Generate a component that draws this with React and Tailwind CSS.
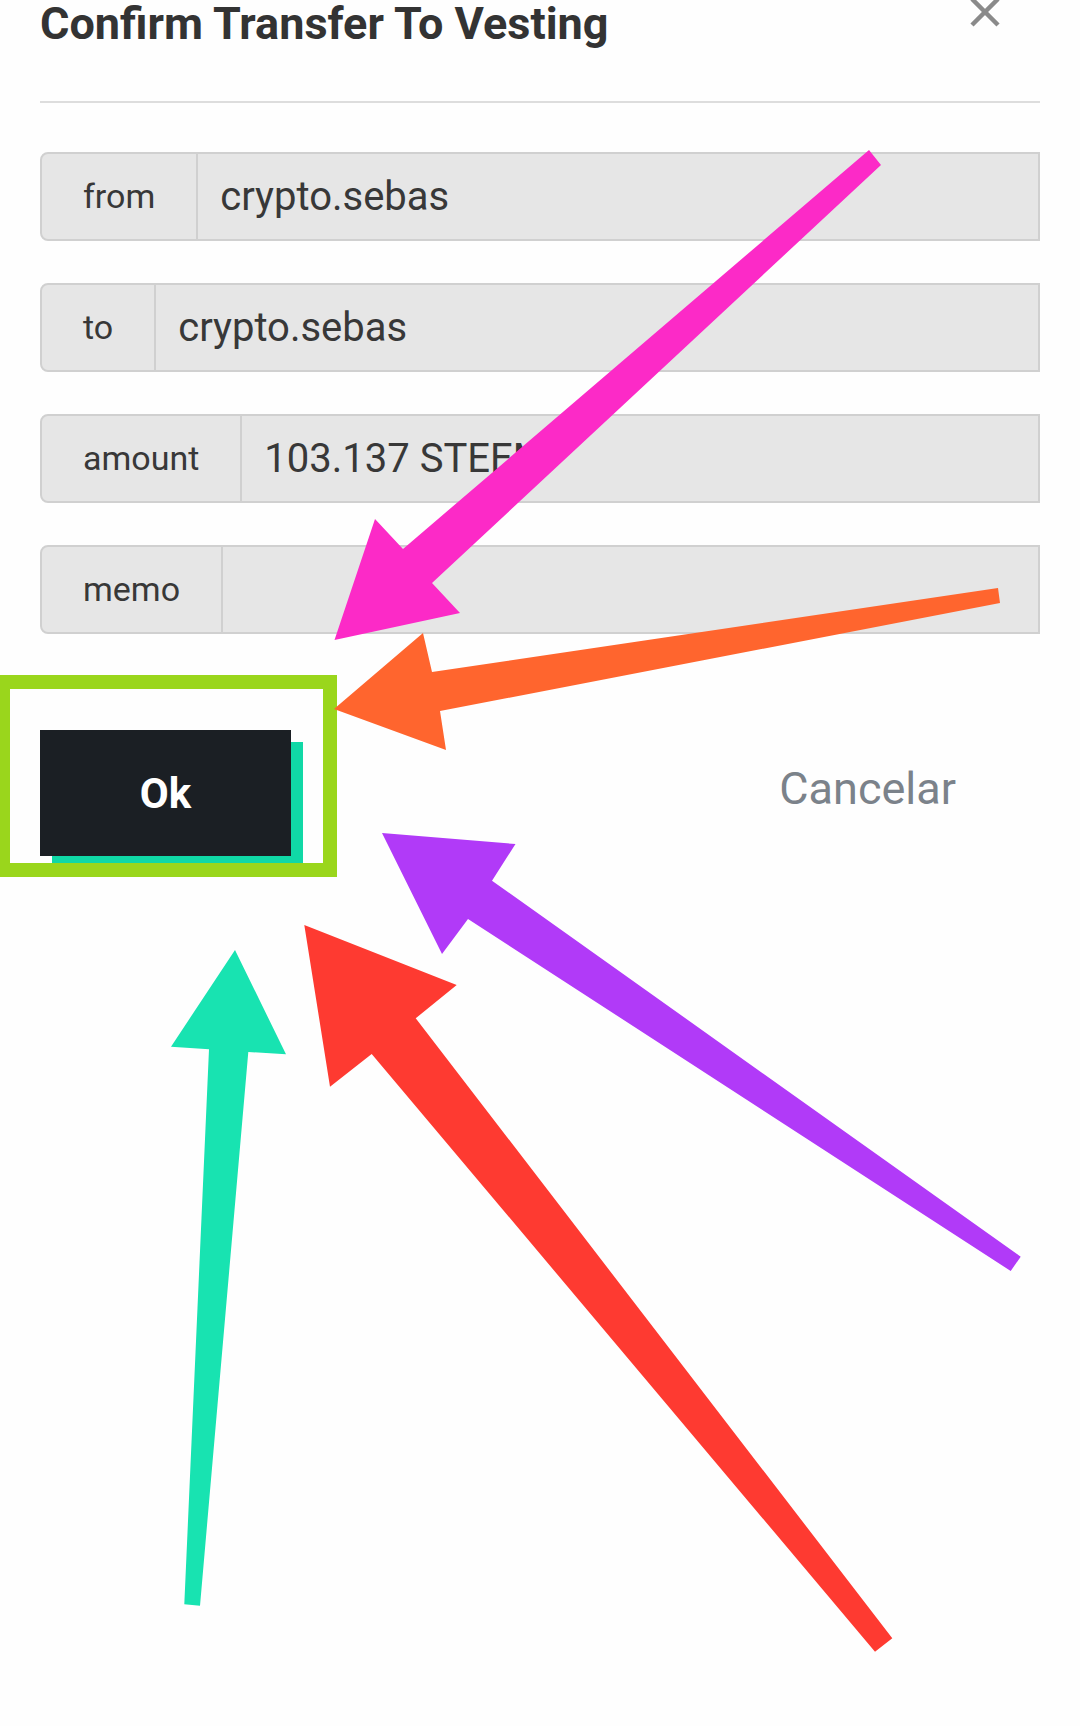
import React from 'react';

const fields = [
  { label: 'from', value: 'crypto.sebas' },
  { label: 'to', value: 'crypto.sebas' },
  { label: 'amount', value: '103.137 STEEM' },
  { label: 'memo', value: '' },
];

function FieldRow({ label, value }) {
  return (
    <div className="flex h-[89px] rounded-l-[8px] border-2 border-[#d0d0d0] bg-[#e6e6e6]">
      <div className="flex items-center border-r-2 border-[#d0d0d0] px-[41px] text-[34px] text-[#383838]">
        {label}
      </div>
      <div className="flex flex-1 items-center pl-[22px] text-[40px] text-[#383838]">{value}</div>
    </div>
  );
}

// Annotation arrows drawn over the screenshot
function Annotations() {
  return (
    <svg
      className="pointer-events-none absolute left-0 top-0"
      width="1080"
      height="1726"
      viewBox="0 0 1080 1726"
    >
      <path
        fillRule="evenodd"
        fill="#9ad61c"
        d="M-4 675 H337 V877 H-4 Z M10 689 V863 H323 V689 Z"
      />
      <polygon fill="#fc2ac7" points="869,150 881,165 432,583 460,613 334.5,640 375,519 403,549" />
      <polygon fill="#ff652e" points="998,588 1000,603 440,711 446,750 334,709 423,633 432,672" />
      <polygon fill="#b13af8" points="1020.7,1256.7 1010.7,1271 468,919 442,954 382,833 515.5,844 492,880.7" />
      <polygon fill="#fe3a31" points="892.3,1638.3 875,1651.7 371.7,1054 330,1086.7 304.3,925 456.7,985 415.7,1018.3" />
      <polygon fill="#18e3b1" points="184.3,1604.3 200,1605.7 248.3,1052 286,1054.3 235,950 171,1046.7 209,1049.3" />
    </svg>
  );
}

export default function App() {
  return (
    <div className="relative h-[1726px] w-[1080px] overflow-hidden bg-[#fefefe] font-['Roboto',sans-serif]">
      <div className="px-[40px]">
        <div className="flex items-start">
          <h2 className="pt-[1px] text-[45px] font-bold leading-[45px] text-[#333]">Confirm Transfer To Vesting</h2>
          <svg className="ml-auto mr-[40px] -mt-[3px]" width="30" height="30" viewBox="0 0 30 30">
            <path d="M2 2 L28 28 M28 2 L2 28" stroke="#8a8a8a" strokeWidth="4.5" />
          </svg>
        </div>

        <div className="mt-[55px] h-[2px] bg-[#dddddd]" />

        <div className="mt-[49px] flex flex-col gap-[42px]">
          {fields.map(f => (
            <FieldRow key={f.label} label={f.label} value={f.value} />
          ))}
        </div>

        <div className="mt-[96px] flex items-center">
          <button className="h-[126px] w-[251px] bg-[#1b1f24] text-[42px] font-bold text-white shadow-[12px_12px_0_#10d8a6]">
            Ok
          </button>
          <button className="mb-[9px] ml-auto mr-[84px] text-[45px] text-[#7b828a]">Cancelar</button>
        </div>
      </div>

      <Annotations />
    </div>
  );
}
